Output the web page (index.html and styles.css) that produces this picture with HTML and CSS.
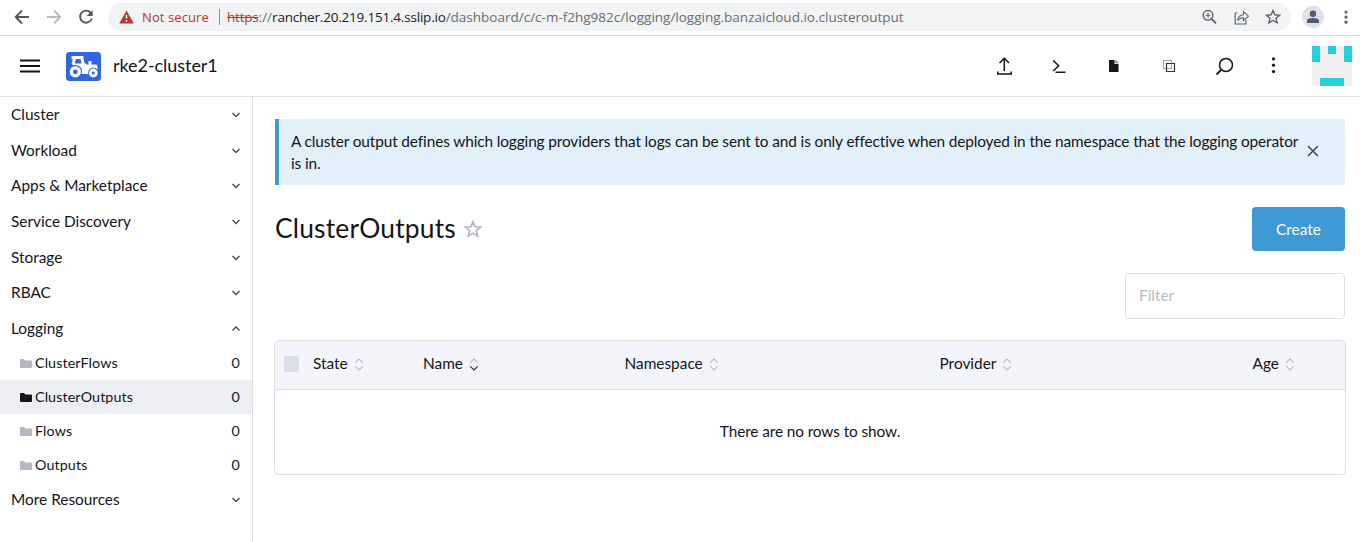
FILE: index.html
```html
<!DOCTYPE html>
<html lang="en">
<head>
<meta charset="utf-8">
<title>ClusterOutputs</title>
<link rel="stylesheet" href="styles.css">
</head>
<body>
<svg class="defs" width="0" height="0">
  <symbol id="down" viewBox="0 0 10 8"><path d="M1.5 2 5 5.5 8.500 2" fill="none" stroke="currentColor" stroke-width="1.3"/></symbol>
  <symbol id="up" viewBox="0 0 10 8"><path d="M1.5 5.5 5 2l3.500 3.500" fill="none" stroke="currentColor" stroke-width="1.3"/></symbol>
  <symbol id="folder" viewBox="0 0 12 9"><path d="M0 1Q0 0 1 0H4L5.200 1.500H11Q12 1.500 12 2.500V8Q12 9 11 9H1Q0 9 0 8Z" fill="currentColor"/></symbol>
  <symbol id="sort" viewBox="0 0 10 14"><path d="M1 5 5 1.200 9 5" fill="none" stroke="#b9bac4" stroke-width="1.200"/><path d="M1 9 5 12.800 9 9" fill="none" stroke="currentColor" stroke-width="1.300"/></symbol>
</svg>
<div class="browser">
  <svg class="nav" width="96" height="34" viewBox="0 0 96 34" fill="none" stroke-width="1.900">
    <path d="M29 17H16M22 10.500 15.700 17 22 23.500" stroke="#54585c"/>
    <path d="M47 17H60M54 10.500 60.300 17 54 23.500" stroke="#babcbe"/>
    <path d="M90.700 12.800A6 6 0 1 0 91.800 18.500" stroke="#54585c"/><path d="M92.700 10V16H86.700Z" fill="#54585c"/>
  </svg>
  <div class="address">
    <svg class="warn" width="15" height="14" viewBox="0 0 15 14"><path d="M7.500 .5 14.800 13.500H.2Z" fill="#c0342b"/><path d="M7.500 5V8.500M7.500 10V11.700" stroke="#fff" stroke-width="1.500"/></svg>
    <span class="insecure">Not secure</span>
    <span class="divider"></span>
    <span class="url"><span class="scheme">https</span>://<span class="host">rancher.20.219.151.4.sslip.io</span>/dashboard/c/c-m-f2hg982c/logging/logging.banzaicloud.io.clusteroutput</span>
    <svg class="tools" width="84" height="20" viewBox="0 0 84 20" fill="none" stroke="#5f6368" stroke-width="1.400">
      <circle cx="8" cy="8.300" r="4.800"/><path d="M11.500 11.800 16 16.300" stroke-width="1.900"/><path d="M5.500 8.300H10.500M8 5.800V10.800" stroke-width="1.100"/>
      <path d="M37.500 6H35.200V17H46V13" stroke-width="1.200"/><path d="M37.500 13.500C38 10 40 8 43.500 7.800V4.700L48.500 9.200 43.500 13.500V10.700C41 10.600 39 11.500 37.500 13.500Z" stroke-width="1.100"/>
      <path d="M73 3.500 74.900 7.800 79.600 8.200 76 11.300 77.100 15.900 73 13.500 68.900 15.900 70 11.300 66.400 8.200 71.100 7.800Z"/>
    </svg>
  </div>
  <svg class="profile" width="22" height="22" viewBox="0 0 22 22"><circle cx="11" cy="11" r="11" fill="#dee1e6"/><circle cx="11" cy="7.700" r="3.200" fill="#505b70"/><path d="M5 17V14.800Q5 12 11 12T17 14.800V17Z" fill="#505b70"/></svg>
  <svg class="dots" width="4" height="14" viewBox="0 0 4 14" fill="#5f6368"><circle cx="2" cy="2" r="1.600"/><circle cx="2" cy="7.100" r="1.600"/><circle cx="2" cy="12.200" r="1.600"/></svg>
</div>
<header class="header">
  <svg class="menu" width="20" height="14" viewBox="0 0 20 14"><path d="M0 1.500H20M0 7H20M0 12.500H20" stroke="#141419" stroke-width="2"/></svg>
  <svg class="logo" width="35" height="29" viewBox="0 0 35 29">
    <rect width="35" height="29" rx="3.500" fill="#3067e0"/>
    <path d="M5.500 5.500H17.500M8.500 6 7.200 12M15.800 6 17.500 13H20" fill="none" stroke="#fff" stroke-width="3"/>
    <path d="M5.500 11.500H18V12.500H22.500V9H25.500V12.500H30.200Q31.500 12.700 31.500 15V22H15L9 16Z" fill="#fff"/>
    <circle cx="9.300" cy="19.600" r="6.700" fill="#3067e0"/><circle cx="9.300" cy="19.800" r="4" fill="none" stroke="#fff" stroke-width="3.200"/>
    <circle cx="27.300" cy="20.800" r="5.200" fill="#3067e0"/><circle cx="27.300" cy="21" r="3" fill="none" stroke="#fff" stroke-width="2.800"/>
  </svg>
  <span class="cluster">rke2-cluster1</span>
  <svg class="actions" width="290" height="24" viewBox="0 0 290 24" fill="none" stroke="#141419" stroke-width="1.500">
    <path d="M14.300 17V4.500M9.500 9 14.300 4.300 19.100 9M7.800 17.500V20H21.200V17.500"/>
    <path d="M63.200 6.500 68.700 11.700 63.200 17M65.500 18.200H75.500"/>
    <path d="M119 6H124.500V10H128.500V18H119Z" fill="#141419" stroke="none"/><path d="M125.300 5.800 128.800 9.300H125.300Z" fill="#777" stroke="none"/>
    <path d="M173.500 6.500H181.500V14.500H173.500Z" stroke="#66666d" stroke-width="1" stroke-dasharray="1.200 .8"/><path d="M176.500 9.500H184.500V17.500H176.500Z" stroke="#33333a" stroke-width="1.200"/>
    <circle cx="236" cy="11" r="6.500"/><path d="M231.300 15.700 226.500 20.500" stroke-width="1.800"/>
    <g fill="#141419" stroke="none"><circle cx="283.500" cy="4.800" r="1.600"/><circle cx="283.500" cy="11.200" r="1.600"/><circle cx="283.500" cy="17.600" r="1.600"/></g>
  </svg>
  <svg class="avatar" width="40" height="40" viewBox="0 0 40 40" shape-rendering="crispEdges"><path d="M0 0H40V40H0Z" fill="#f0f0f0"/><path d="M0 0H8V16H0ZM16 0H24V8H16ZM32 0H40V16H32ZM8 32H32V40H8Z" fill="#27cfd9"/></svg>
</header>
<div class="layout">
  <nav class="side">
    <div class="group">Cluster<svg><use href="#down"/></svg></div>
    <div class="group">Workload<svg><use href="#down"/></svg></div>
    <div class="group">Apps &amp; Marketplace<svg><use href="#down"/></svg></div>
    <div class="group">Service Discovery<svg><use href="#down"/></svg></div>
    <div class="group">Storage<svg><use href="#down"/></svg></div>
    <div class="group">RBAC<svg><use href="#down"/></svg></div>
    <div class="group">Logging<svg><use href="#up"/></svg></div>
    <div class="item"><svg><use href="#folder"/></svg><span>ClusterFlows</span><b>0</b></div>
    <div class="item active"><svg><use href="#folder"/></svg><span>ClusterOutputs</span><b>0</b></div>
    <div class="item"><svg><use href="#folder"/></svg><span>Flows</span><b>0</b></div>
    <div class="item"><svg><use href="#folder"/></svg><span>Outputs</span><b>0</b></div>
    <div class="group">More Resources<svg><use href="#down"/></svg></div>
  </nav>
  <main class="main">
    <div class="banner">
      <p>A cluster output defines which logging providers that logs can be sent to and is only effective when deployed in the namespace that the logging operator<br>is in.</p>
      <svg width="12" height="12" viewBox="0 0 12 12"><path d="M1 1 11 11M11 1 1 11" stroke="#4a4b52" stroke-width="1.600"/></svg>
    </div>
    <div class="heading">
      <h1>ClusterOutputs</h1>
      <svg width="18" height="18" viewBox="0 0 18 18"><path d="M9 1.800 11 6.700 16.600 7.100 12.400 10.700 13.700 16 9 13.200 4.300 16 5.600 10.700 1.400 7.100 7 6.700Z" fill="none" stroke="#b9bac4" stroke-width="1.800"/></svg>
      <button class="create">Create</button>
    </div>
    <input class="filter" placeholder="Filter">
    <div class="table">
      <div class="thead">
        <i class="check"></i>
        <span>State<svg><use href="#sort"/></svg></span>
        <span class="sorted">Name<svg><use href="#sort"/></svg></span>
        <span>Namespace<svg><use href="#sort"/></svg></span>
        <span>Provider<svg><use href="#sort"/></svg></span>
        <span>Age<svg><use href="#sort"/></svg></span>
      </div>
      <div class="empty">There are no rows to show.</div>
    </div>
  </main>
</div>
</body>
</html>
```
FILE: styles.css
```css
* { box-sizing: border-box; }
body { margin: 0; height: 542px; overflow: hidden; background: #fff; color: #141419; font: 15.4px/22px Lato, sans-serif; }
svg { display: block; flex: none; }
.defs { position: absolute; }

.browser { height: 36px; display: flex; align-items: center; border-bottom: 1px solid #dadce0; padding-bottom: 1px; font: 13.5px/20px "Open Sans", sans-serif; }
.nav { margin-right: 12px; }
.address { width: 1183px; height: 28px; border-radius: 14px; background: #f1f3f4; display: flex; align-items: center; padding-left: 11px; }
.insecure { width: 69px; margin-left: 8px; color: #b8372e; font-size: 13px; letter-spacing: .1px; white-space: nowrap; }
.divider { width: 1px; height: 16px; background: #8e9195; margin: 0 7px 0 8px; }
.url { color: #6a6d71; white-space: nowrap; }
.host { color: #202124; letter-spacing: -.2px; }
.scheme { color: #b8372e; letter-spacing: -.2px; text-decoration: line-through; }
.tools { margin-left: auto; margin-right: 7px; }
.profile { margin-left: 11px; }
.dots { margin-left: 20px; }

.header { height: 61px; display: flex; align-items: center; border-bottom: 1px solid #dcdee7; padding: 0 8px 0 20px; }
.logo { margin-left: 26px; }
.cluster { margin-left: 12px; padding-bottom: 2px; font-size: 18px; letter-spacing: -.05px; }
.actions { margin-left: auto; }
.avatar { margin-left: 32px; }

.layout { display: flex; height: 445px; }
.side { flex: none; width: 253px; border-right: 1px solid #dcdee7; }
.group { height: 35.6px; display: flex; align-items: center; justify-content: space-between; padding: 0 11px 1px; }
.group svg { width: 10px; height: 8px; margin-top: 2px; color: #45454c; }
.item { height: 34px; display: flex; align-items: center; padding: 0 12px 0 20px; font-size: 14.3px; letter-spacing: .1px; }
.item svg { width: 12px; height: 9px; margin-right: 3px; color: #b6b7c2; }
.item b { margin-left: auto; padding-bottom: 1px; font-weight: 400; }
.item.active { background: #eeeff4; }
.item.active svg { color: #141419; }

.main { flex: 1; min-width: 0; padding: 22px 15px 0 22px; }
.banner { height: 66px; display: flex; align-items: center; justify-content: space-between; padding: 0 26px 0 12px; border-left: 4px solid #4497c6; background: #e2f0f9; }
.banner p { margin: 0; white-space: nowrap; letter-spacing: -.118px; font-variant-ligatures: common-ligatures; }
.banner svg { margin-bottom: 3px; }
.heading { height: 44px; margin-top: 22px; display: flex; align-items: center; }
.heading h1 { margin: 0 8px 2px 0; font-size: 26.4px; line-height: 32px; font-weight: 400; letter-spacing: .18px; }
.create { margin-left: auto; width: 93px; height: 44px; border: 0; border-radius: 4px; background: #3d98d3; color: #fff; font: 15.4px Lato, sans-serif; }
.filter { display: block; width: 220px; height: 46px; margin: 22px 0 21px auto; border: 1px solid #dcdee7; border-radius: 4px; padding: 0 13px 2px; font: 15.4px Lato, sans-serif; }
.filter::placeholder { color: #b8bac8; }
.table { height: 135px; margin-left: -1px; width: 1072px; border: 1px solid #dcdee7; border-radius: 5px; overflow: hidden; }
.thead { height: 49px; display: grid; grid-template-columns: 38px 110px 201.500px 315px 313px 1fr; align-items: center; background: #f4f5fa; border-bottom: 1px solid #dcdee7; }
.thead span { display: flex; align-items: center; padding-bottom: 4px; }
.thead svg { width: 10px; height: 13px; margin: 3px 0 0 6px; color: #b9bac4; }
.thead .sorted svg { color: #2a2a30; }
.check { width: 15px; height: 16px; margin: 0 0 3px 9px; border-radius: 3px; background: #dcdee7; }
.empty { height: 84px; display: flex; align-items: center; justify-content: center; padding-bottom: 2px; letter-spacing: -.11px; }
```
